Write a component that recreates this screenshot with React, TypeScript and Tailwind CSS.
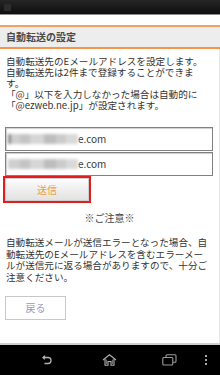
import React from "react";

const font = { fontFamily: '"Noto Sans CJK JP", "Noto Sans", sans-serif' };

const BlurredEmail = ({ lead }: { lead?: boolean }) => (
  <div className="flex items-center h-full pl-[2px]">
    <div className="flex h-[10px] w-[70px] blur-[1.5px]">
      <div className={lead ? "w-[3px] bg-[#8a8a8a]" : "w-[3px] bg-[#cfcfcf]"} />
      <div className="w-[9px] bg-[#cfcfcf]" />
      <div className="w-[10px] bg-[#c4c4c4]" />
      <div className="w-[14px] bg-[#d6d6d6]" />
      <div className="w-[12px] bg-[#bdbdbd]" />
      <div className="w-[10px] bg-[#cbcbcb]" />
      <div className="w-[12px] bg-[#d9d9d9]" />
    </div>
    <span className="text-[10px] text-[#3a3a3a] leading-none">e.com</span>
  </div>
);

export default function App() {
  return (
    <div className="w-[220px] h-[375px] flex flex-col bg-white overflow-hidden" style={font}>
      {/* status bar */}
      <div className="h-[15px] bg-gradient-to-b from-[#262626] to-[#0e0e0e] border-b border-[#8c8c8c] flex items-center pl-[4px]">
        <div className="w-[7px] h-[7px] rounded-[1px] bg-[#2c2c2c]" />
      </div>

      <div className="h-[10px]" />
      <div className="h-[2px] bg-[#f6a060]" />
      <div className="h-[20px] bg-[#ededed] flex items-center px-[6px]">
        <span className="text-[10px] font-bold text-[#4a4a4a] leading-none">自動転送の設定</span>
      </div>
      <div className="h-[2px] bg-[#f7944c]" />

      <div className="flex-1 flex flex-col px-[5px] pt-[7px] border-r border-[#e8e8e8]">
        <p className="text-[9.6px] leading-[11px] text-[#333] whitespace-nowrap pl-[1px]">
          自動転送先のEメールアドレスを設定します。
          <br />
          自動転送先は2件まで登録することができま
          <br />
          す。
          <br />
          「@」以下を入力しなかった場合は自動的に
          <br />
          「@ezweb.ne.jp」が設定されます。
        </p>

        <div className="mt-[16px] flex flex-col gap-[1px] w-[208px]">
          <div className="h-[24px] border border-[#808080] shadow-[inset_1px_1px_1px_#cfcfcf]">
            <BlurredEmail lead />
          </div>
          <div className="h-[24px] border border-[#808080] shadow-[inset_1px_1px_1px_#cfcfcf]">
            <BlurredEmail />
          </div>
        </div>

        <div className="-ml-[2px] w-[88px] h-[27px] border-2 border-[#e61c1c] flex">
          <button className="flex-1 border border-[#cfcfcf] bg-gradient-to-b from-[#fcfcfc] to-[#e2e2e2] text-[10px] text-[#f39a3c] leading-none">
            送信
          </button>
        </div>

        <div className="mt-[9px] text-center text-[10px] leading-[11px] text-[#444]">※ご注意※</div>

        <p className="mt-[14px] text-[9.6px] leading-[11.5px] text-[#333] whitespace-nowrap pl-[1px]">
          自動転送メールが送信エラーとなった場合、自
          <br />
          動転送先のEメールアドレスを含むエラーメー
          <br />
          ルが送信元に返る場合がありますので、十分ご
          <br />
          注意ください。
        </p>

        <button className="mt-[13px] w-[61px] h-[24px] border border-[#c8c8c8] bg-white text-[10px] text-[#9a9ab8] leading-none">
          戻る
        </button>
      </div>

      {/* nav bar */}
      <div className="h-[2px] bg-[#d0d0d0]" />
      <div className="h-[30px] bg-black flex items-center">
        <div className="w-[42px]" />
        <svg width="10" height="10" viewBox="0 0 10 10" fill="none" stroke="#b0b0b0" strokeWidth="1.3">
          <path d="M1 2.5 H6 A3 3 0 0 1 6 8.5 H2.5" />
          <path d="M3 0.8 L1 2.5 L3 4.2" fill="#b0b0b0" />
        </svg>
        <div className="w-[50px]" />
        <svg width="15" height="12" viewBox="0 0 15 12" fill="none" stroke="#b0b0b0" strokeWidth="1.1">
          <path d="M1 6 L7.5 0.8 L14 6" />
          <path d="M3 5 V11.3 H6 V7.5 H9 V11.3 H12 V5" />
          <path d="M4.6 5.6 V10 M10.4 5.6 V10" strokeWidth="0.7" />
        </svg>
        <div className="w-[45px]" />
        <svg width="15" height="12" viewBox="0 0 15 12" fill="none" stroke="#9a9a9a" strokeWidth="1.1">
          <rect x="4" y="0.8" width="10" height="7.5" rx="1" />
          <rect x="0.8" y="3.5" width="10" height="7.5" rx="1" fill="#000" />
        </svg>
        <div className="w-[28px]" />
        <div className="flex flex-col gap-[2px]">
          <div className="w-[2px] h-[2px] bg-[#a8a8a8]" />
          <div className="w-[2px] h-[2px] bg-[#a8a8a8]" />
          <div className="w-[2px] h-[2px] bg-[#a8a8a8]" />
        </div>
      </div>
    </div>
  );
}
